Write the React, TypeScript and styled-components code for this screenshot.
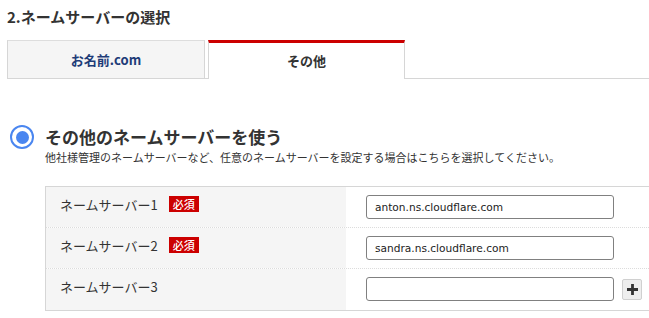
import React from 'react';
import styled, { createGlobalStyle } from 'styled-components';

const GlobalStyle = createGlobalStyle`
  html, body {
    margin: 0;
    padding: 0;
    background: #ffffff;
  }
  body {
    font-family: "Noto Sans CJK JP", "DejaVu Sans", sans-serif;
    color: #333333;
  }
`;

const Page = styled.div`
  width: 649px;
  height: 318px;
  overflow: hidden;
  padding: 0 0 0 7px;
  box-sizing: border-box;
`;

const Heading = styled.h2`
  margin: 0;
  padding-top: 6px;
  height: 40px;
  box-sizing: border-box;
  font-size: 15px;
  line-height: 22px;
  font-weight: 700;
  color: #333333;
`;

const Tabs = styled.div`
  display: flex;
  height: 39px;
  border-bottom: 1px solid #d6d6d6;
  box-sizing: border-box;
`;

const Tab = styled.div<{ $active?: boolean }>`
  width: ${(p) => (p.$active ? '197px' : '198px')};
  margin-right: ${(p) => (p.$active ? '0' : '3px')};
  box-sizing: border-box;
  display: flex;
  align-items: center;
  justify-content: center;
  padding-bottom: 1px;
  font-size: 13px;
  font-weight: 700;
  background: ${(p) => (p.$active ? '#ffffff' : '#f5f5f5')};
  color: ${(p) => (p.$active ? '#333333' : '#1e3c78')};
  border-top: ${(p) => (p.$active ? '3px solid #cc0000' : '1px solid #dddddd')};
  border-left: 1px solid #d6d6d6;
  border-right: 1px solid #d6d6d6;
  margin-bottom: ${(p) => (p.$active ? '-1px' : '0')};
`;

const Option = styled.div`
  display: flex;
  align-items: center;
  gap: 11px;
  margin-top: 45px;
  padding-left: 3px;
`;

const Radio = styled.span`
  width: 24px;
  height: 24px;
  box-sizing: border-box;
  border-radius: 50%;
  border: 2.5px solid #4a86f0;
  display: flex;
  align-items: center;
  justify-content: center;
  &::after {
    content: '';
    width: 13px;
    height: 13px;
    border-radius: 50%;
    background: #4a86f0;
  }
`;

const OptionTitle = styled.div`
  font-size: 17px;
  font-weight: 700;
  line-height: 26px;
  color: #333333;
`;

const Description = styled.p`
  margin: -2px 0 0 38px;
  font-size: 11px;
  line-height: 18px;
  color: #333333;
`;

const Table = styled.div`
  margin: 20px 0 0 38px;
  border-top: 1px solid #d6d6d6;
  border-bottom: 1px solid #d6d6d6;
  border-left: 1px solid #d6d6d6;
`;

const Row = styled.div<{ $last?: boolean }>`
  display: flex;
  height: 41px;
  box-sizing: border-box;
  border-bottom: ${(p) => (p.$last ? 'none' : '1px dotted #dcdcdc')};
`;

const LabelCell = styled.div`
  width: 300px;
  background: #f5f5f5;
  display: flex;
  align-items: center;
  padding: 0 0 6px 14px;
  box-sizing: border-box;
  gap: 11px;
  font-size: 13px;
  color: #333333;
`;

const Required = styled.span`
  background: #cc0000;
  color: #ffffff;
  font-size: 11px;
  line-height: 16px;
  padding: 0 4px;
  font-weight: 500;
`;

const InputCell = styled.div`
  flex: 1;
  display: flex;
  align-items: center;
  padding: 0 0 1px 20px;
  gap: 8px;
`;

const TextInput = styled.input`
  width: 248px;
  height: 24px;
  box-sizing: border-box;
  border: 1px solid #808080;
  border-radius: 3px;
  padding: 0 8px;
  font-family: "DejaVu Sans", "Noto Sans", sans-serif;
  font-size: 10.6px;
  color: #222222;
  outline: none;
`;

const PlusButton = styled.button`
  width: 20px;
  height: 21px;
  padding: 0;
  border: 1px solid #d0d0d0;
  border-radius: 2px;
  background: #eeeeee;
  display: flex;
  align-items: center;
  justify-content: center;
  cursor: pointer;
`;

const servers = [
  { label: 'ネームサーバー1', value: 'anton.ns.cloudflare.com', required: true },
  { label: 'ネームサーバー2', value: 'sandra.ns.cloudflare.com', required: true },
  { label: 'ネームサーバー3', value: '', required: false },
];

export default function App() {
  return (
    <>
      <GlobalStyle />
      <Page>
        <Heading>2.ネームサーバーの選択</Heading>
        <Tabs>
          <Tab>お名前.com</Tab>
          <Tab $active>その他</Tab>
        </Tabs>
        <Option>
          <Radio />
          <OptionTitle>その他のネームサーバーを使う</OptionTitle>
        </Option>
        <Description>
          他社様管理のネームサーバーなど、任意のネームサーバーを設定する場合はこちらを選択してください。
        </Description>
        <Table>
          {servers.map((s, i) => (
            <Row key={s.label} $last={i === servers.length - 1}>
              <LabelCell>
                {s.label}
                {s.required && <Required>必須</Required>}
              </LabelCell>
              <InputCell>
                <TextInput defaultValue={s.value} />
                {i === servers.length - 1 && (
                  <PlusButton type="button">
                    <svg width="13" height="13" viewBox="0 0 13 13">
                      <path d="M6.5 1v11M1 6.5h11" stroke="#333" strokeWidth="2.8" />
                    </svg>
                  </PlusButton>
                )}
              </InputCell>
            </Row>
          ))}
        </Table>
      </Page>
    </>
  );
}
